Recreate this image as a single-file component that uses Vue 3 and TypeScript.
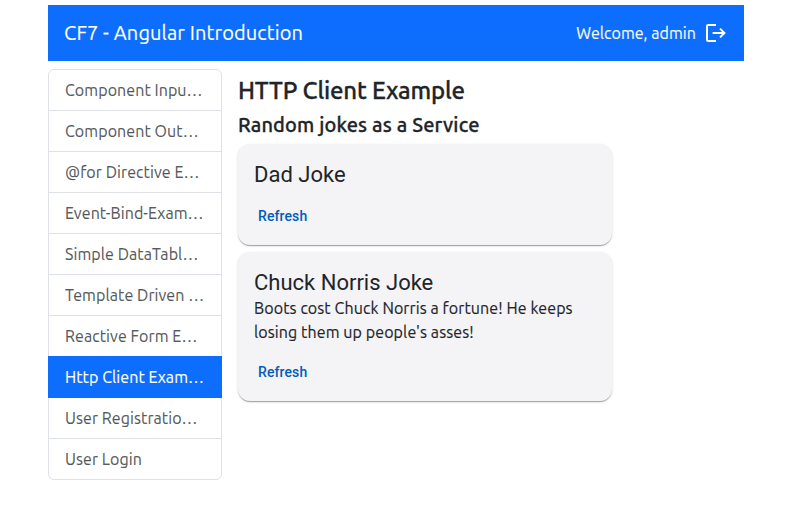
<script setup lang="ts">
interface MenuItem {
  label: string
  active?: boolean
}

interface JokeCard {
  title: string
  joke?: string
}

const menu: MenuItem[] = [
  { label: 'Component Inpu…' },
  { label: 'Component Out…' },
  { label: '@for Directive E…' },
  { label: 'Event-Bind-Exam…' },
  { label: 'Simple DataTabl…' },
  { label: 'Template Driven …' },
  { label: 'Reactive Form E…' },
  { label: 'Http Client Exam…', active: true },
  { label: 'User Registratio…' },
  { label: 'User Login' },
]

const cards: JokeCard[] = [
  { title: 'Dad Joke' },
  {
    title: 'Chuck Norris Joke',
    joke: "Boots cost Chuck Norris a fortune! He keeps losing them up people's asses!",
  },
]
</script>

<template>
  <div class="container">
    <nav class="navbar">
      <span class="brand">CF7 - Angular Introduction</span>
      <div class="user">
        <span class="welcome">Welcome, admin</span>
        <svg class="logout" viewBox="0 0 24 24" width="24" height="24">
          <path d="M12 4H4.2Q3 4 3 5.2V18.8Q3 20 4.2 20H12" />
          <path d="M8.6 12h12M16 7.6L20.4 12l-4.4 4.4" />
        </svg>
      </div>
    </nav>
    <div class="layout">
      <ul class="menu">
        <li v-for="item in menu" :key="item.label" class="item" :class="{ active: item.active }">
          <span>{{ item.label }}</span>
        </li>
      </ul>
      <main class="content">
        <h4 class="title">HTTP Client Example</h4>
        <h5 class="subtitle">Random jokes as a Service</h5>
        <section v-for="card in cards" :key="card.title" class="card">
          <div class="card-title">{{ card.title }}</div>
          <p v-if="card.joke" class="joke">{{ card.joke }}</p>
          <div class="actions"><button class="refresh" type="button">Refresh</button></div>
        </section>
      </main>
    </div>
  </div>
</template>

<style>
body {
  background: #fff;
}
</style>

<style scoped>
.container {
  box-sizing: border-box;
  width: 696px;
  margin-left: 48px;
  padding-top: 5px;
  font-family: Ubuntu, 'Noto Sans', sans-serif;
  font-size: 16px;
  line-height: 24px;
  color: #212529;
  -webkit-text-stroke-width: 0.15px;
}
.navbar {
  display: flex;
  align-items: center;
  justify-content: space-between;
  box-sizing: border-box;
  height: 56px;
  padding: 0 16px;
  background: #0d6efd;
  color: #fff;
}
.brand {
  font-size: 20px;
  letter-spacing: 0.12px;
  white-space: nowrap;
}
.user {
  display: flex;
  align-items: center;
  gap: 8px;
}
.welcome {
  letter-spacing: 0.05px;
  color: #f8f9fa;
}
.logout {
  fill: none;
  stroke: #fff;
  stroke-width: 2;
}
.layout {
  display: flex;
  gap: 16px;
  padding-top: 8px;
  align-items: flex-start;
}
.menu {
  box-sizing: border-box;
  width: 174px;
  margin: 0;
  padding: 0;
  list-style: none;
  border: 1px solid #dee2e6;
  border-radius: 6px;
}
.item {
  height: 24px;
  padding: 8px 16px;
  border-bottom: 1px solid #dee2e6;
  color: rgba(33, 37, 41, 0.75);
  letter-spacing: 0.08px;
  white-space: nowrap;
}
.item:last-child {
  border-bottom: 0;
}
.item.active {
  margin: -1px -1px 0;
  padding: 9px 17px 8px;
  border-color: #0d6efd;
  background: #0d6efd;
  color: #fff;
}
.content {
  width: 374px;
  padding-top: 8px;
}
.title {
  margin: 0 0 7px;
  font-size: 24px;
  line-height: 28.8px;
  font-weight: 500;
  letter-spacing: -0.18px;
  -webkit-text-stroke-width: 0.3px;
}
.subtitle {
  margin: 0 0 7.2px;
  font-size: 20px;
  line-height: 24px;
  font-weight: 500;
  letter-spacing: 0.14px;
  -webkit-text-stroke-width: 0.3px;
}
.card {
  box-sizing: border-box;
  margin-bottom: 7px;
  padding: 17px 16px 12px;
  border-radius: 12px;
  background: #f4f3f6;
  box-shadow: 0 2px 1px -1px rgba(0, 0, 0, 0.2), 0 1px 1px rgba(0, 0, 0, 0.14), 0 1px 3px rgba(0, 0, 0, 0.12);
}
.card-title {
  font-family: Roboto, sans-serif;
  font-size: 22px;
  line-height: 28px;
  -webkit-text-stroke-width: 0;
}
.joke {
  margin: -1px 0 1px;
  letter-spacing: 0.1px;
}
.actions {
  display: flex;
  padding: 9px 0 0 4px;
}
.refresh {
  height: 36px;
  margin-bottom: -1px;
  padding: 0;
  border: 0;
  background: transparent;
  font-family: Roboto, sans-serif;
  font-size: 14px;
  font-weight: 500;
  letter-spacing: 0.1px;
  color: #005cbb;
  -webkit-text-stroke-width: 0;
}
</style>
